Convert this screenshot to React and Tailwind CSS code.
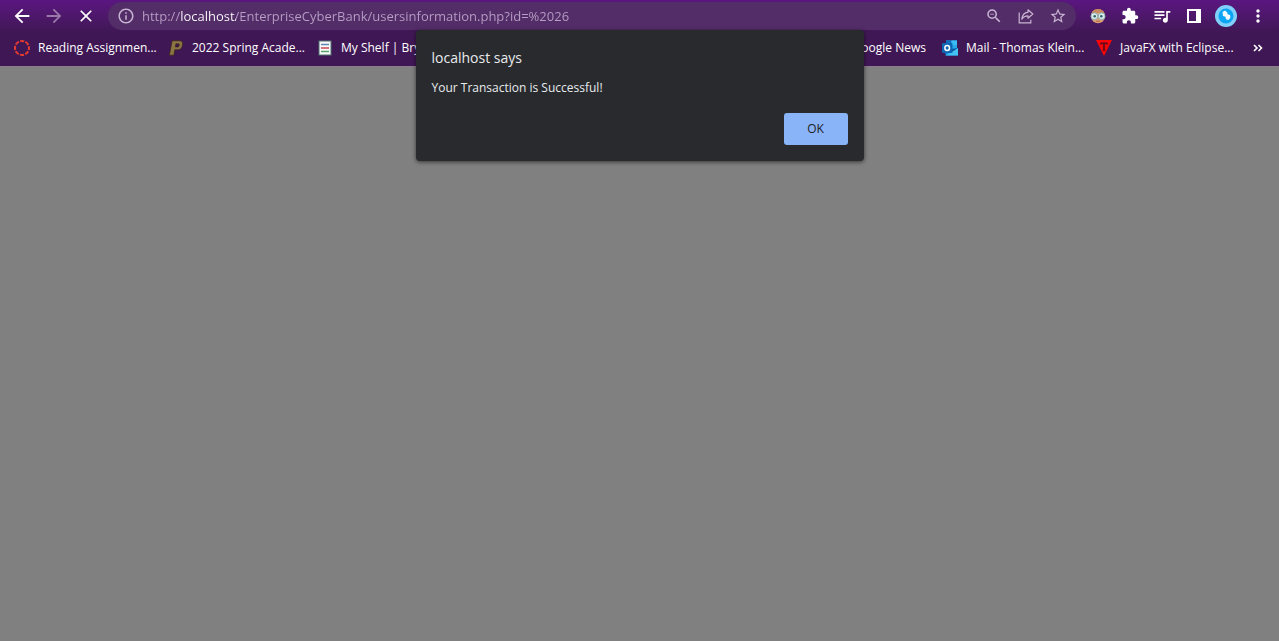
import React from "react";
import {
  MdArrowBack,
  MdArrowForward,
  MdClose,
  MdExtension,
  MdInfoOutline,
  MdMoreVert,
  MdQueueMusic,
  MdStarBorder,
  MdZoomOut,
} from "react-icons/md";

function IconButton({ label, className = "", children }) {
  return (
    <button
      type="button"
      aria-label={label}
      className={`flex h-8 w-8 shrink-0 items-center justify-center ${className}`}
    >
      {children}
    </button>
  );
}

function ShareIcon() {
  return (
    <svg width="16" height="16" viewBox="0 0 16 16" fill="none" stroke="currentColor" strokeWidth="1.2">
      <path d="M1.200 4.500v10.300h11.600v-3" />
      <path d="M10 1.800l4.800 4.200L10 10.200V7.800C7.200 7.800 5.200 8.800 3.800 11.200 4.200 7.400 6.200 4.700 10 4.200z" strokeLinejoin="round" />
    </svg>
  );
}

function FaceIcon() {
  return (
    <svg width="16" height="16" viewBox="0 0 16 16">
      <circle cx="8" cy="8.200" r="7" fill="#d9a078" />
      <path d="M1.300 6C2 2.600 4.600 1 8 1s6 1.600 6.700 5C11 4.200 5 4.200 1.300 6z" fill="#c98a62" />
      <circle cx="4.300" cy="8.200" r="3.400" fill="#d9ecec" stroke="#7fa3a8" strokeWidth="0.800" />
      <circle cx="11.700" cy="8.200" r="3.400" fill="#d9ecec" stroke="#7fa3a8" strokeWidth="0.800" />
      <circle cx="4.700" cy="8.200" r="1.300" fill="#37616b" />
      <circle cx="11.300" cy="8.200" r="1.300" fill="#37616b" />
      <path d="M6 13.200h4" stroke="#b5654a" strokeWidth="1" />
    </svg>
  );
}

function SidePanelIcon() {
  return (
    <svg width="14" height="14" viewBox="0 0 14 14">
      <path fillRule="evenodd" fill="currentColor" d="M0 0h14v14H0zM2 2v10h7V2z" />
    </svg>
  );
}

function ProfileIcon() {
  return (
    <svg width="22" height="22" viewBox="0 0 22 22">
      <circle cx="11" cy="11" r="11" fill="#81d0fb" />
      <circle cx="11" cy="11" r="7.500" fill="#0aa5f5" />
      <path d="M7.500 7l2.500-1.500 2.300 2 .2 1.800 2.500.7.500 2.500-2 2.500-2.500-.8-.5-2.400-2.500-.8z" fill="#f2fbff" />
    </svg>
  );
}

function RingIcon() {
  return (
    <svg width="16" height="16" viewBox="0 0 16 16">
      <circle cx="8" cy="8" r="7" fill="none" stroke="#e23b32" strokeWidth="2" strokeDasharray="4.200 1.298" strokeDashoffset="2.100" />
    </svg>
  );
}

function PurdueIcon() {
  return (
    <svg width="16" height="16" viewBox="0 0 16 16">
      <path
        fillRule="evenodd"
        fill="#8c7445"
        stroke="#33230f"
        strokeWidth="0.600"
        d="M4.300.8h7.200c2.400 0 3.400 1.300 3 3.500l-.3 1.800c-.5 2.500-1.900 3.600-4.400 3.600H6.800l-1 5.500H1.400l2.300-12.300h-.1zM7.900 3.800l-.6 3.200h2.300c.8 0 1.200-.3 1.400-1l.2-1.100c.1-.8-.2-1.100-.9-1.100z"
      />
    </svg>
  );
}

function ShelfIcon() {
  return (
    <svg width="16" height="16" viewBox="0 0 16 16">
      <rect x="2" y="1" width="12" height="14" fill="#f7f9f8" stroke="#4f7370" />
      <path d="M4 4.500h8" stroke="#5d87b5" strokeWidth="1.500" />
      <path d="M4 8h8" stroke="#d05a62" strokeWidth="1.700" />
      <path d="M4 11.500h8" stroke="#55a56a" strokeWidth="1.500" />
    </svg>
  );
}

function OutlookIcon() {
  return (
    <svg width="16" height="16" viewBox="0 0 16 16">
      <rect x="4" y="0.500" width="11" height="10" fill="#28a8ea" />
      <path d="M4 .5h5.500V5H4z" fill="#0f6cbd" />
      <path d="M9.500.5H15V5H9.500z" fill="#38bdf5" />
      <path d="M3.500 15.500V8L16 8v7.500z" fill="#1490df" />
      <path d="M3.500 15.500L16 8v7.500z" fill="#43c3f3" />
      <path d="M9.500 9.500L16 8l-6.500 4z" fill="#0a4d8c" />
      <rect x="0" y="3" width="10.500" height="10" rx="0.800" fill="#0f66b5" />
      <ellipse cx="5.200" cy="8" rx="2.300" ry="2.500" fill="none" stroke="#fff" strokeWidth="1.500" />
    </svg>
  );
}

function TriangleIcon() {
  return (
    <svg width="16" height="16" viewBox="0 0 16 16">
      <path d="M0 0h16L8 16z" fill="#f80505" />
      <path d="M4.500 2.500h7v2.200h-.8L10 3.800H8.800v6l.8 1H6.400l.8-1v-6H6l-.7.900h-.8z" fill="#52091c" />
    </svg>
  );
}

function Bookmark({ icon, label, className = "" }) {
  return (
    <a href="#" className="flex shrink-0 items-center gap-2 whitespace-nowrap text-white">
      {icon}
      <span className={className}>{label}</span>
    </a>
  );
}

export default function App() {
  return (
    <div className="relative min-h-screen bg-[#808080] font-['Open_Sans',sans-serif]">
      <header className="border-b border-[#8b7c91] bg-[#401755]">
        <div className="flex h-8 items-center bg-linear-to-b from-[#5b1681] to-[#401755] pr-[5px] pl-1.5 text-white">
          <IconButton label="Back"><MdArrowBack size={22} /></IconButton>
          <IconButton label="Forward" className="text-[#9a78a9]"><MdArrowForward size={22} /></IconButton>
          <IconButton label="Stop loading"><MdClose size={20} /></IconButton>
          <div className="mx-1.5 flex h-7 min-w-0 flex-1 items-center rounded-full bg-[#532d67] pr-0.5 pl-[9px] text-[#c9b5d3]">
            <MdInfoOutline size={18} className="shrink-0" />
            <input
              type="text"
              aria-label="Address"
              defaultValue="http://localhost/EnterpriseCyberBank/usersinformation.php?id=%2026"
              className="ml-[7px] min-w-0 flex-1 bg-[linear-gradient(90deg,#b79fc6_38px,#fff_38px,#fff_94px,#b79fc6_94px)] bg-clip-text text-[13px] leading-5 text-transparent outline-none"
            />
            <IconButton label="Zoom out"><MdZoomOut size={18} /></IconButton>
            <IconButton label="Share this page"><ShareIcon /></IconButton>
            <IconButton label="Bookmark this tab"><MdStarBorder size={18} /></IconButton>
          </div>
          <IconButton label="Reader extension"><FaceIcon /></IconButton>
          <IconButton label="Extensions"><MdExtension size={18} /></IconButton>
          <IconButton label="Media controls"><MdQueueMusic size={20} /></IconButton>
          <IconButton label="Side panel"><SidePanelIcon /></IconButton>
          <IconButton label="Profile"><ProfileIcon /></IconButton>
          <IconButton label="Menu"><MdMoreVert size={20} /></IconButton>
        </div>
        <nav aria-label="Bookmarks" className="flex h-[34px] items-center gap-4 pr-4 pb-0.5 pl-3.5 text-[12px] leading-4">
          <Bookmark icon={<RingIcon />} label="Reading Assignmen..." className="w-[114px]" />
          <Bookmark icon={<PurdueIcon />} label="2022 Spring Acade..." className="w-[109px]" />
          <Bookmark icon={<ShelfIcon />} label="My Shelf | Bryt" />
          <div className="flex-1" />
          <Bookmark label="Google News" />
          <Bookmark icon={<OutlookIcon />} label="Mail - Thomas Klein..." className="w-[114px]" />
          <Bookmark icon={<TriangleIcon />} label="JavaFX with Eclipse..." className="w-[109px]" />
          <button type="button" aria-label="More bookmarks" className="flex w-[18px] shrink-0 justify-end text-white">
            <svg width="10" height="8" viewBox="0 0 10 8" fill="none" stroke="currentColor" strokeWidth="1.600">
              <path d="M1 1l3 3-3 3M5.500 1l3 3-3 3" />
            </svg>
          </button>
        </nav>
      </header>

      <div
        role="alertdialog"
        aria-labelledby="alert-title"
        aria-describedby="alert-message"
        className="absolute top-[30px] left-1/2 w-[448px] -translate-x-1/2 rounded bg-[#292a2d] p-4 text-[#e8eaed] shadow-[0_1px_4px_rgba(0,0,0,0.6)]"
      >
        <h1 id="alert-title" className="text-[14px] leading-6">localhost says</h1>
        <p id="alert-message" className="mt-2 text-[12px] leading-5">Your Transaction is Successful!</p>
        <div className="mt-[15px] flex justify-end">
          <button type="button" className="h-8 w-16 rounded-[3px] bg-[#8ab4f8] text-[12px] leading-4 text-[#202124]">OK</button>
        </div>
      </div>
    </div>
  );
}
